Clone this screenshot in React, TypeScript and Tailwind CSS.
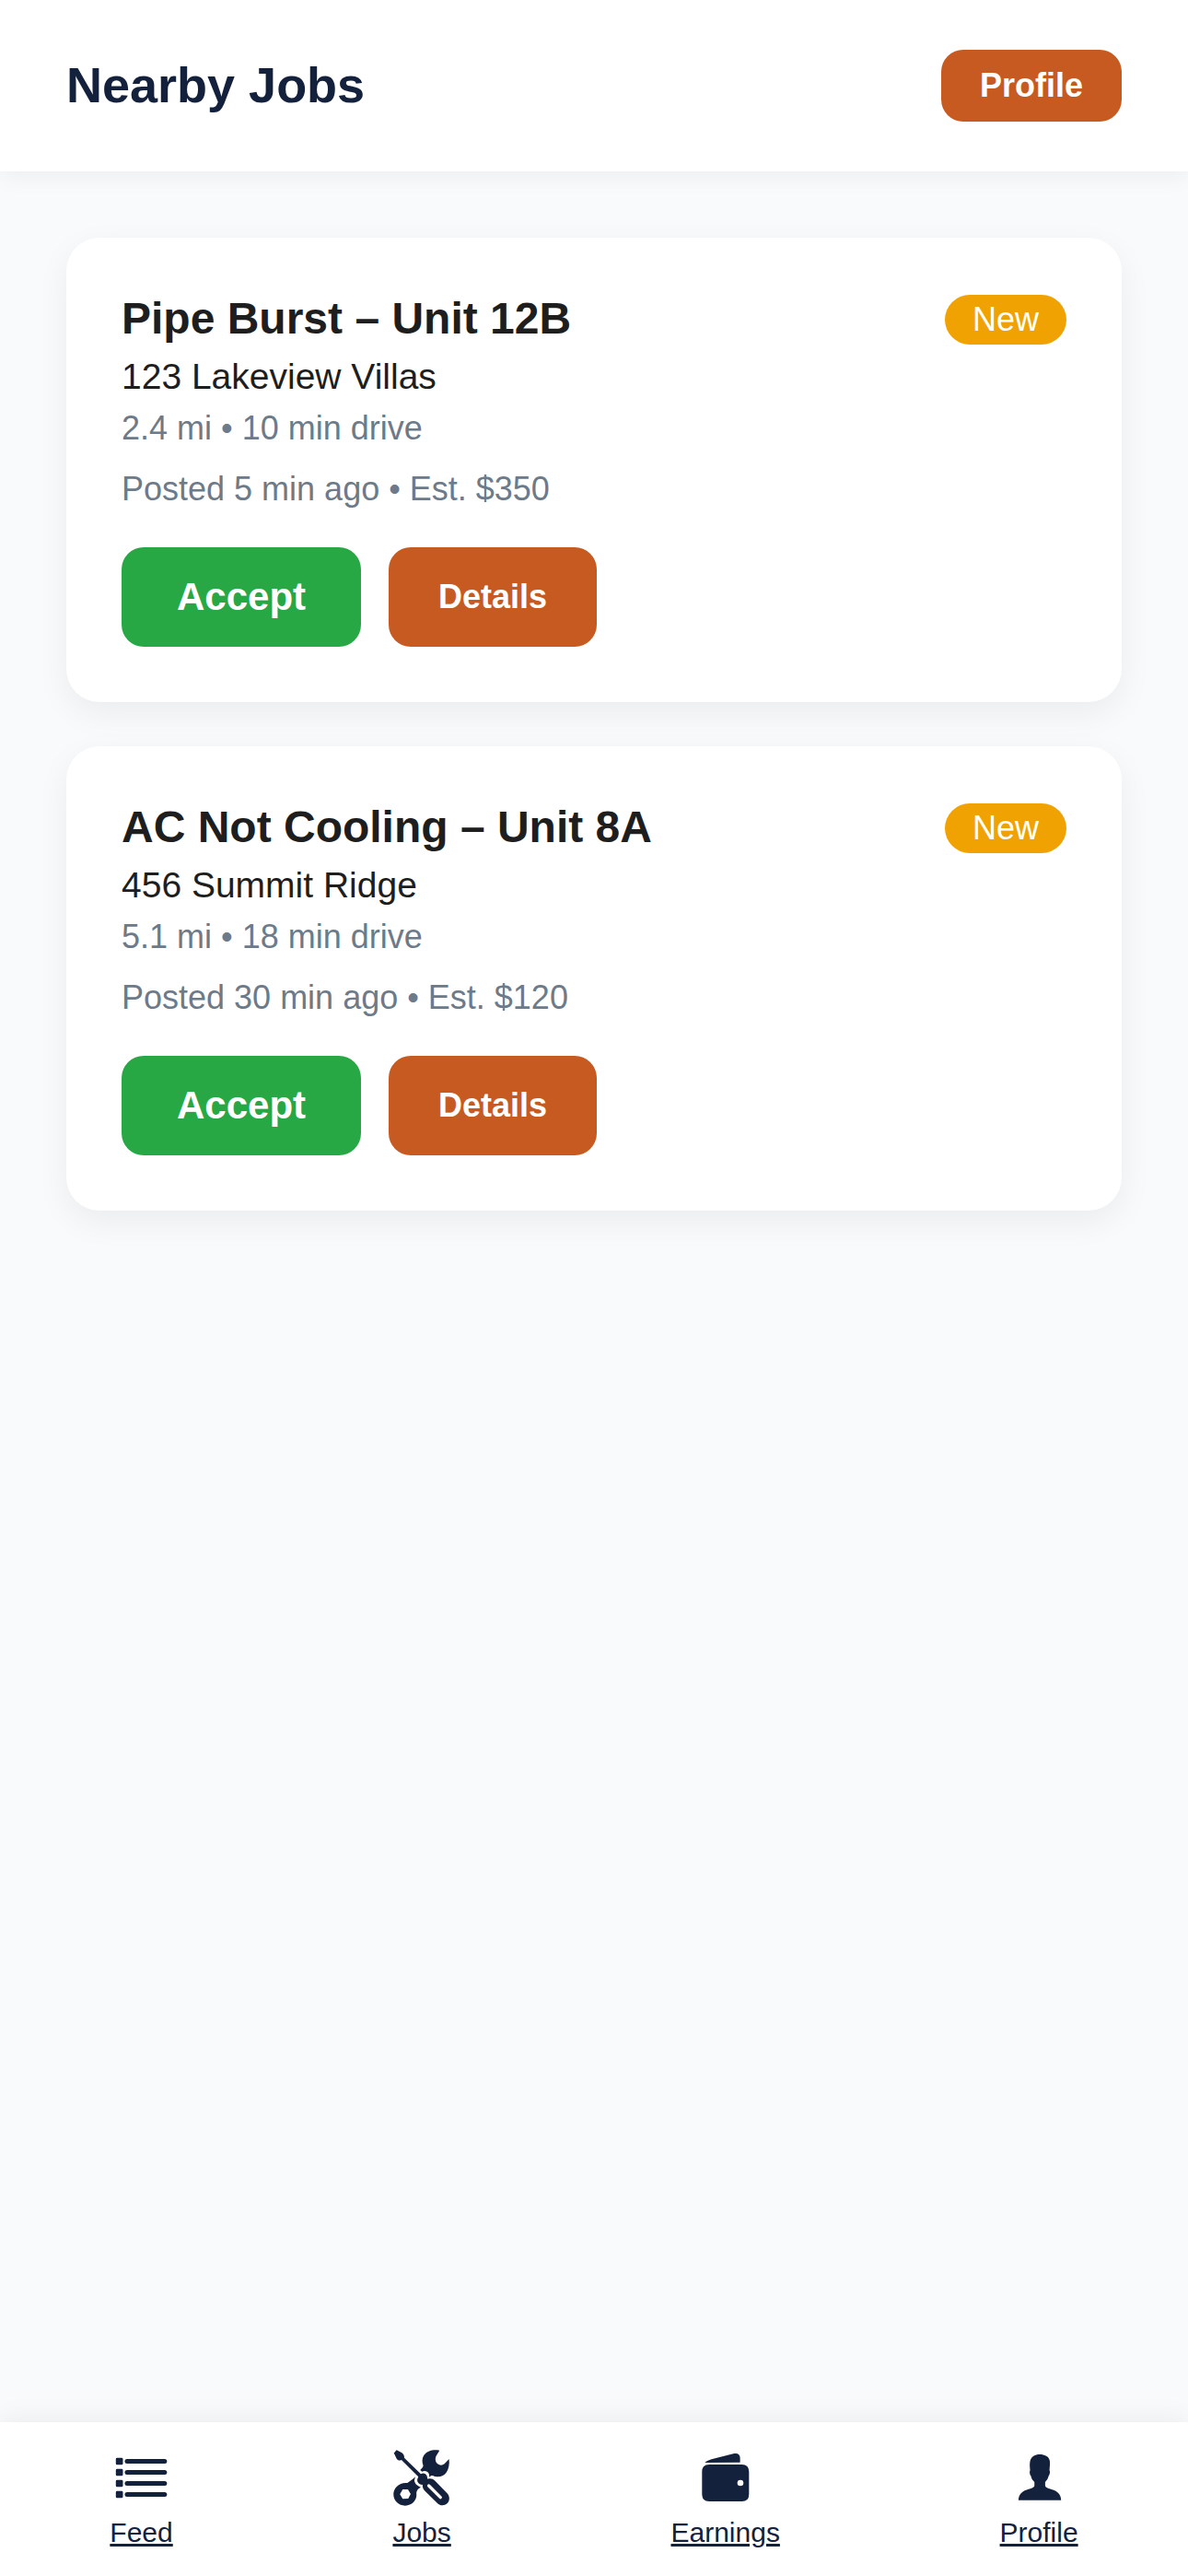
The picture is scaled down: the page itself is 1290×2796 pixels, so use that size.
import type { ReactNode } from "react";

type Job = {
  title: string;
  address: string;
  distance: string;
  posted: string;
};

const jobs: Job[] = [
  {
    title: "Pipe Burst – Unit 12B",
    address: "123 Lakeview Villas",
    distance: "2.4 mi • 10 min drive",
    posted: "Posted 5 min ago • Est. $350",
  },
  {
    title: "AC Not Cooling – Unit 8A",
    address: "456 Summit Ridge",
    distance: "5.1 mi • 18 min drive",
    posted: "Posted 30 min ago • Est. $120",
  },
];

function Icon({ viewBox, children }: { viewBox: string; children: ReactNode }) {
  return (
    <svg viewBox={viewBox} className="size-[60px] overflow-visible" fill="currentColor" aria-hidden="true">
      {children}
    </svg>
  );
}

function FeedIcon() {
  return (
    <Icon viewBox="100.6 144 180 180">
      {[184.5, 220.5, 256.5, 292.5].map((y) => (
        <g key={y}>
          <rect x="106" y={y - 11.5} width="23" height="23" rx="4" />
          <rect x="135" y={y - 7.5} width="137.5" height="15" rx="7.5" />
        </g>
      ))}
    </Icon>
  );
}

function ToolsIcon() {
  return (
    <Icon viewBox="12.2 6 180 180">
      {/* wrench head */}
      <path d="M160 11 C140 7 119 12 109 27 C102 38 103 50 107 61 C106 66 102 71 97 75 L103 80 C112 76 121 79 125 86 C127 90 127 94 126 98 L133 93 C136 92 140 94 146 96 C160 99 175 95 183 82 C190 71 193 55 191 39 L176 55 C169 61 160 60 154 55 C146 49 145 37 149 29 Z" />
      {/* wrench ring */}
      <path
        fillRule="evenodd"
        d="M81 97 L75 103 C68 108 61 114 55 117 C30 114 10 132 10 154 C10 175 27 191 48 191 C70 191 86 174 85 154 C84 143 88 137 99 131 C87 127 79 119 78 109 Z M40 138 L57 138 L66 153 L58 168 L40 169 L31 154 Z"
      />
      {/* screwdriver */}
      <path d="M20 10 L36 18 C42 22 46 28 45 35 L99 88 C106 84 113 85 118 92 C121 97 119 101 122 104 C131 101 139 104 144 109 L185 151 C194 161 194 175 185 184 C176 192 162 192 153 183 L111 142 C106 136 104 130 105 123 C97 123 90 119 88 112 C86 106 90 101 91 97 L36 42 C31 45 25 44 21 39 C17 33 16 26 11 20 Z" />
      <path d="M125 126 L163 164" stroke="white" strokeWidth="10" strokeLinecap="round" />
    </Icon>
  );
}

function WalletIcon() {
  return (
    <Icon viewBox="143.1 144 180 180">
      <path d="M165 189 C171 184 179 181 187 178 L258 160 C270 156 280 161 280 173 L280 188 Z" />
      <path
        fillRule="evenodd"
        d="M179 195 H286 Q309 195 309 218 V292 Q309 315 286 315 H179 Q156 315 156 292 V218 Q156 195 179 195 Z M281 245 A10 10 0 1 0 281 265 A10 10 0 1 0 281 245 Z"
      />
    </Icon>
  );
}

function PersonIcon() {
  return (
    <Icon viewBox="114.3 144 180 180">
      <path d="M207 162 C223 162 237 168 240 183 C241 193 240 203 239 213 C242 219 240 229 236 233 C234 242 229 247 225 252 L225 265 C227 271 236 273 246 276 C264 281 276 291 277 311 H138 C139 291 151 281 169 276 C179 273 188 271 190 265 L190 252 C186 247 180 242 179 233 C175 229 173 219 176 213 C175 203 174 193 176 184 C180 168 192 162 207 162 Z" />
    </Icon>
  );
}

const tabs = [
  { label: "Feed", icon: <FeedIcon /> },
  { label: "Jobs", icon: <ToolsIcon /> },
  { label: "Earnings", icon: <WalletIcon /> },
  { label: "Profile", icon: <PersonIcon /> },
];

function JobCard({ job }: { job: Job }) {
  return (
    <article className="h-[504px] rounded-[36px] bg-white p-[60px] shadow-[0_12px_36px_rgba(0,0,0,0.06)]">
      <div className="flex items-center justify-between">
        <h2 className="text-[48px] leading-[56px] font-bold">{job.title}</h2>
        <span className="mt-px -mb-px rounded-full bg-[#f0a202] px-[30px] py-1.5 text-[36px] leading-[42px] text-white">
          New
        </span>
      </div>
      <p className="mt-3 text-[39px] leading-[45px]">{job.address}</p>
      <p className="mt-[13px] text-[36px] leading-[42px] text-[#6c7a89]">{job.distance}</p>
      <p className="mt-6 text-[36px] leading-[42px] text-[#6c7a89]">{job.posted}</p>
      <div className="mt-[42px] flex gap-[30px]">
        <button className="h-[108px] rounded-[24px] bg-[#28a745] px-[60px] pb-0.5 text-[42px] font-bold text-white">
          Accept
        </button>
        <button className="h-[108px] rounded-[24px] bg-[#c65a20] px-[54px] text-[36px] font-bold text-white">
          Details
        </button>
      </div>
    </article>
  );
}

export default function App() {
  return (
    <div className="flex h-[2796px] w-[1290px] flex-col bg-[#f9fafc] font-['Liberation_Sans',Arial,sans-serif] text-[#1e1e1e]">
      <header className="flex h-[186px] shrink-0 items-center justify-between bg-white px-[72px] shadow-[0_6px_24px_rgba(0,0,0,0.05)]">
        <h1 className="pb-0.5 text-[54px] leading-[62px] font-bold text-[#14213d]">Nearby Jobs</h1>
        <button className="h-[78px] rounded-[24px] bg-[#c65a20] px-[42px] text-[36px] font-bold text-white">
          Profile
        </button>
      </header>
      <main className="flex grow flex-col gap-12 p-[72px]">
        {jobs.map((job) => (
          <JobCard key={job.title} job={job} />
        ))}
      </main>
      <nav className="flex h-[167px] shrink-0 justify-around bg-white pt-[29px] text-[#14213d] shadow-[0_-6px_24px_rgba(0,0,0,0.05)]">
        {tabs.map((tab) => (
          <a
            key={tab.label}
            href="#"
            className="flex flex-col items-center gap-[13px] text-[30px] leading-[35px] underline decoration-[3px] [text-decoration-skip-ink:auto]"
          >
            {tab.icon}
            <span>{tab.label}</span>
          </a>
        ))}
      </nav>
    </div>
  );
}
